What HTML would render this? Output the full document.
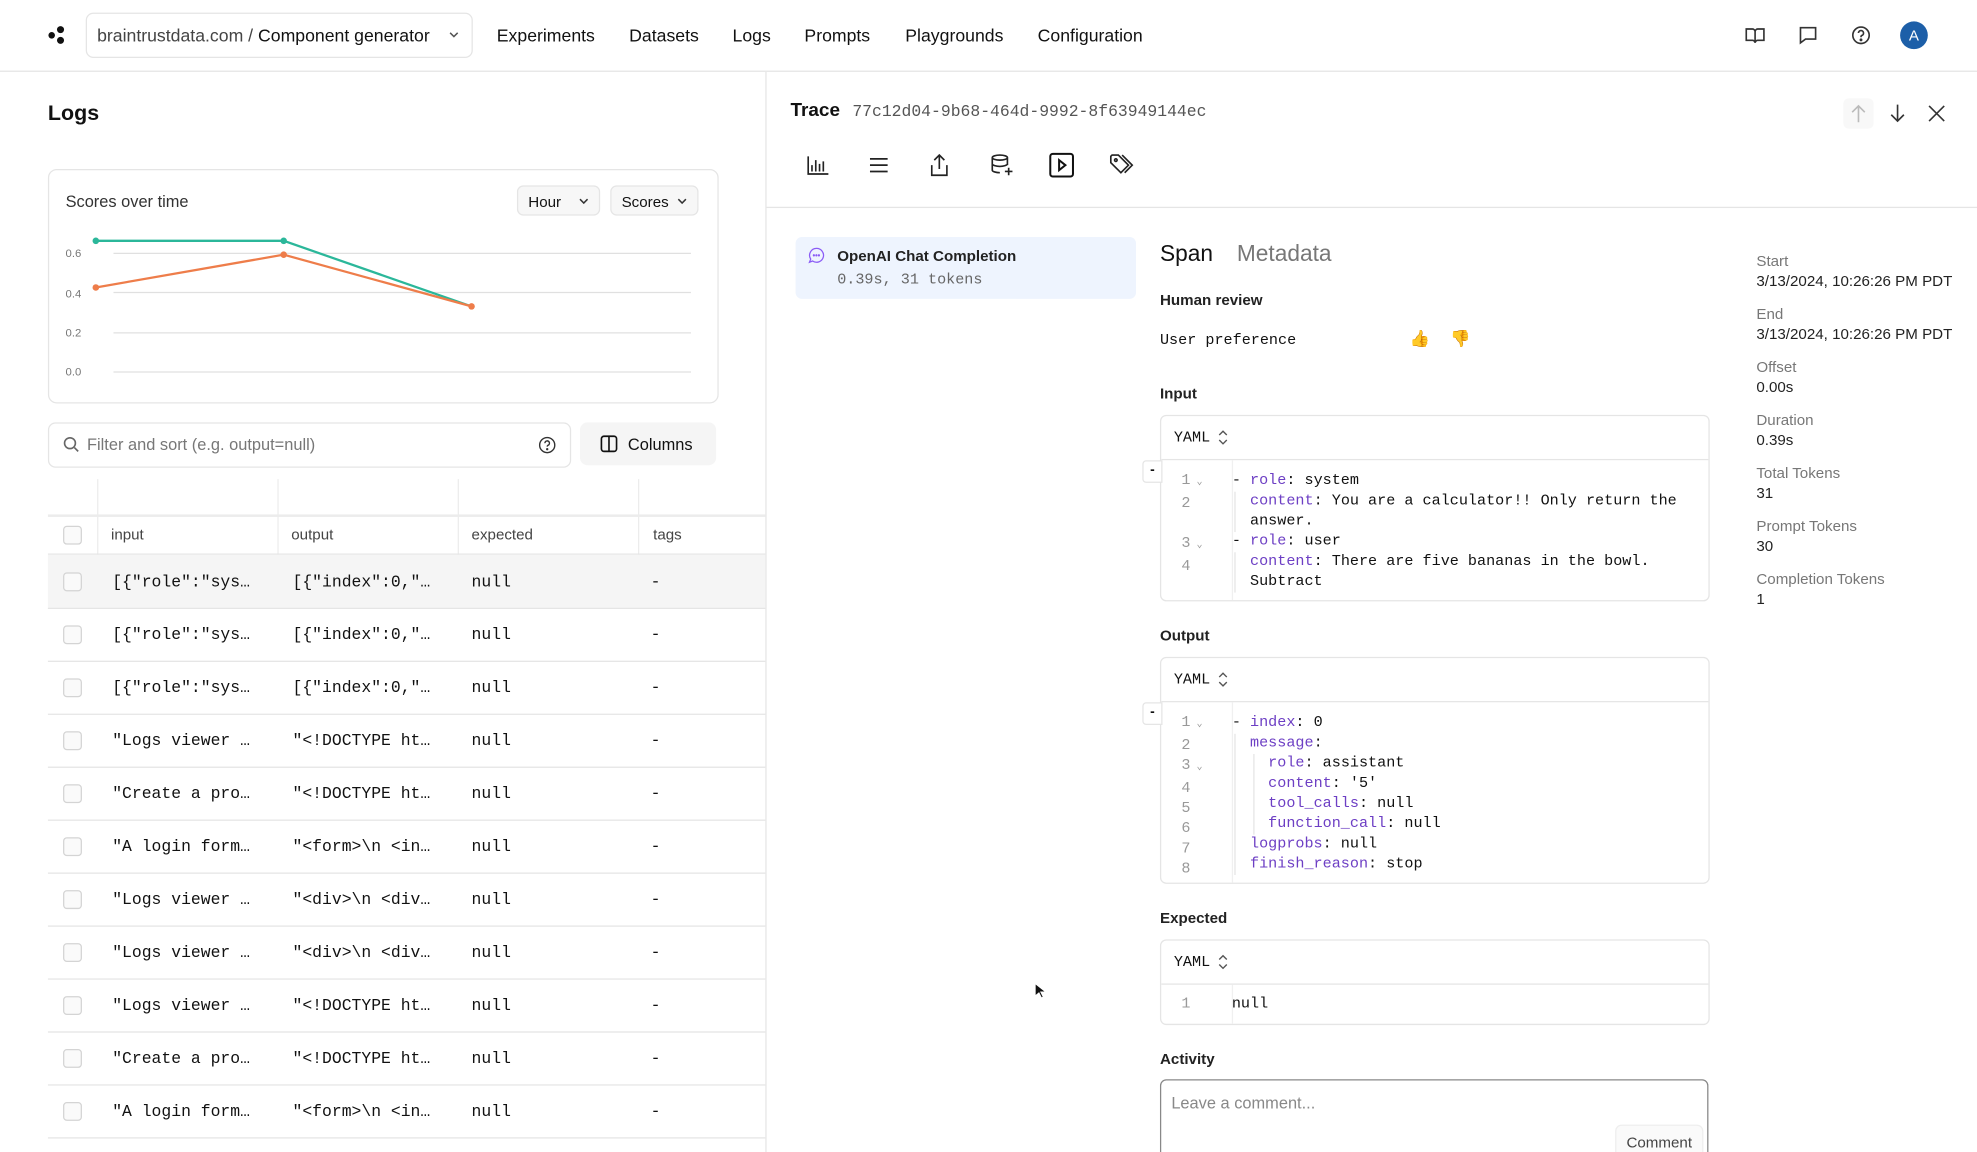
<!DOCTYPE html>
<html><head><meta charset="utf-8"><style>
html,body{margin:0;padding:0;background:#fff;overflow:hidden}
#w{position:relative;width:1568px;height:914px;transform:scale(1.26084);transform-origin:0 0;font-family:"Liberation Sans",sans-serif;color:#111;overflow:hidden}
.a{position:absolute;white-space:nowrap}
.m{font-family:"Liberation Mono",monospace}
.nav{font-size:14px;top:20px;color:#111}
.cb{position:absolute;width:13px;height:13px;border:1px solid #d4d4d4;border-radius:3px;background:#fafafa}
.row{position:absolute;left:38px;width:569px;height:42px;border-bottom:1px solid #e5e5e5}
.row span{position:absolute;top:14px;font-size:13px;font-family:"Liberation Mono",monospace}
.lbl{font-size:12px;color:#777}
.val{font-size:12px;color:#222}
.code{font-family:"Liberation Mono",monospace;font-size:12px;line-height:16px;white-space:pre;margin:0}
.k{color:#6d3fc4}
.ln{color:#999}
.box{position:absolute;left:920px;width:434px;border:1px solid #e5e5e5;border-radius:5px;overflow:hidden}
.bh{height:34px;border-bottom:1px solid #e5e5e5;font-family:"Liberation Mono",monospace;font-size:12px;line-height:34px;padding-left:10px;position:relative}
.sel{position:absolute;left:45px;top:11px}
.hl{font-size:12px;font-weight:bold;color:#222}
</style></head><body><div id="w">
<div class="a" style="left:0;top:56px;width:1568px;border-top:1px solid #e5e5e5"></div>
<svg class="a" style="left:38px;top:20px" width="18" height="16"><circle cx="3" cy="8" r="2.6" fill="#111"/><circle cx="10" cy="3.5" r="2.8" fill="#111"/><circle cx="10" cy="12" r="2.8" fill="#111"/></svg>
<div class="a" style="left:68px;top:10px;width:305px;height:34px;border:1px solid #e5e5e5;border-radius:6px"></div>
<div class="a" style="left:77px;top:20px;font-size:14px"><span style="color:#444">braintrustdata.com / </span>Component generator</div>
<svg class="a" style="left:355px;top:24px" width="10" height="8"><path d="M2 2l3 3 3-3" stroke="#555" fill="none" stroke-width="1.2"/></svg>
<div class="a nav" style="left:394px">Experiments</div>
<div class="a nav" style="left:499px">Datasets</div>
<div class="a nav" style="left:581px">Logs</div>
<div class="a nav" style="left:638px">Prompts</div>
<div class="a nav" style="left:718px">Playgrounds</div>
<div class="a nav" style="left:823px">Configuration</div>
<svg class="a" style="left:1384px;top:20px" width="16" height="16" fill="none" stroke="#333" stroke-width="1.3"><path d="M1 3h5c1 0 2 1 2 2v9c0-1-1-2-2-2H1zM15 3h-5c-1 0-2 1-2 2v9c0-1 1-2 2-2h5z"/></svg>
<svg class="a" style="left:1426px;top:20px" width="16" height="16" fill="none" stroke="#333" stroke-width="1.3"><path d="M2 2h12v9H6l-4 3z"/></svg>
<svg class="a" style="left:1468px;top:20px" width="16" height="16" fill="none" stroke="#333" stroke-width="1.3"><circle cx="8" cy="8" r="6.5"/><path d="M6 6.2a2 2 0 1 1 2.5 2c-.5.2-.5.6-.5 1.3"/><circle cx="8" cy="11.6" r=".5" fill="#333"/></svg>
<div class="a" style="left:1507px;top:17px;width:22px;height:22px;border-radius:50%;background:#1d5fa8;color:#fff;font-size:12px;text-align:center;line-height:22px">A</div>
<div class="a" style="left:607px;top:57px;height:857px;border-left:1px solid #e5e5e5"></div>
<div class="a" style="left:38px;top:80px;font-size:17px;font-weight:bold">Logs</div>
<div class="a" style="left:38px;top:134px;width:530px;height:184px;border:1px solid #e5e5e5;border-radius:7px"></div>
<div class="a" style="left:52px;top:152px;font-size:13px;color:#333">Scores over time</div>
<div class="a" style="left:410px;top:147px;width:66px;height:24px;border:1px solid #e5e5e5;border-radius:5px;background:#f7f7f7;font-size:12px;line-height:24px;padding-left:8px;box-sizing:border-box">Hour<svg style="position:absolute;left:48px;top:9px" width="8" height="6"><path d="M1 1l3 3 3-3" stroke="#333" fill="none" stroke-width="1.2"/></svg></div>
<div class="a" style="left:484px;top:147px;width:70px;height:24px;border:1px solid #e5e5e5;border-radius:5px;background:#f7f7f7;font-size:12px;line-height:24px;padding-left:8px;box-sizing:border-box">Scores<svg style="position:absolute;left:52px;top:9px" width="8" height="6"><path d="M1 1l3 3 3-3" stroke="#333" fill="none" stroke-width="1.2"/></svg></div>
<svg class="a" style="left:38px;top:134px" width="530" height="184">
<g stroke="#e0e0e0"><line x1="52" y1="67" x2="510" y2="67"/><line x1="52" y1="98" x2="510" y2="98"/><line x1="52" y1="130" x2="510" y2="130"/><line x1="52" y1="161" x2="510" y2="161"/></g>
<g font-size="9" fill="#777" font-family="Liberation Sans"><text x="14" y="70">0.6</text><text x="14" y="102">0.4</text><text x="14" y="133">0.2</text><text x="14" y="164">0.0</text></g>
<polyline points="38,57 187,57 336,109" stroke="#2bb79a" stroke-width="1.8" fill="none"/>
<polyline points="38,94 187,68 336,109" stroke="#ee7d4a" stroke-width="1.8" fill="none"/>
<g fill="#2bb79a"><circle cx="38" cy="57" r="2.6"/><circle cx="187" cy="57" r="2.6"/></g>
<g fill="#ee7d4a"><circle cx="38" cy="94" r="2.6"/><circle cx="187" cy="68" r="2.6"/><circle cx="336" cy="109" r="2.6"/></g>
</svg>
<div class="a" style="left:38px;top:335px;width:413px;height:34px;border:1px solid #e5e5e5;border-radius:6px"></div>
<svg class="a" style="left:50px;top:346px" width="13" height="13" fill="none" stroke="#666" stroke-width="1.3"><circle cx="5.5" cy="5.5" r="4.3"/><path d="M9 9l3 3"/></svg>
<div class="a" style="left:69px;top:345px;font-size:13px;color:#777">Filter and sort (e.g. output=null)</div>
<svg class="a" style="left:427px;top:346px" width="14" height="14" fill="none" stroke="#333" stroke-width="1.1"><circle cx="7" cy="7" r="6"/><path d="M5.2 5.5a1.8 1.8 0 1 1 2.3 1.7c-.4.2-.5.5-.5 1"/><circle cx="7" cy="10.3" r=".4" fill="#333"/></svg>
<div class="a" style="left:460px;top:335px;width:108px;height:34px;border-radius:6px;background:#f5f5f5"></div>
<svg class="a" style="left:476px;top:345px" width="14" height="14" fill="none" stroke="#111" stroke-width="1.3"><rect x="1" y="1" width="12" height="12" rx="2"/><path d="M7 1v12"/></svg>
<div class="a" style="left:498px;top:345px;font-size:13px">Columns</div>
<div class="a" style="left:38px;top:408px;width:569px;border-top:2px solid #ececec"></div>
<div class="a" style="left:77px;top:380px;height:60px;border-left:1px solid #ececec"></div>
<div class="a" style="left:220px;top:380px;height:60px;border-left:1px solid #ececec"></div>
<div class="a" style="left:363px;top:380px;height:60px;border-left:1px solid #ececec"></div>
<div class="a" style="left:506px;top:380px;height:60px;border-left:1px solid #ececec"></div>
<div class="cb" style="left:50px;top:417px"></div>
<div class="a" style="left:88px;top:417px;font-size:12px;color:#444">input</div>
<div class="a" style="left:231px;top:417px;font-size:12px;color:#444">output</div>
<div class="a" style="left:374px;top:417px;font-size:12px;color:#444">expected</div>
<div class="a" style="left:518px;top:417px;font-size:12px;color:#444">tags</div>
<div class="a" style="left:38px;top:439px;width:569px;border-top:1px solid #e5e5e5"></div>
<div class="row" style="top:440px;background:#f5f5f5"><div class="cb" style="left:12px;top:14px"></div><span style="left:51px">[{"role":"sys…</span><span style="left:194px">[{"index":0,"…</span><span style="left:336px">null</span><span style="left:478px">-</span></div>
<div class="row" style="top:482px"><div class="cb" style="left:12px;top:14px"></div><span style="left:51px">[{"role":"sys…</span><span style="left:194px">[{"index":0,"…</span><span style="left:336px">null</span><span style="left:478px">-</span></div>
<div class="row" style="top:524px"><div class="cb" style="left:12px;top:14px"></div><span style="left:51px">[{"role":"sys…</span><span style="left:194px">[{"index":0,"…</span><span style="left:336px">null</span><span style="left:478px">-</span></div>
<div class="row" style="top:566px"><div class="cb" style="left:12px;top:14px"></div><span style="left:51px">"Logs viewer …</span><span style="left:194px">"&lt;!DOCTYPE ht…</span><span style="left:336px">null</span><span style="left:478px">-</span></div>
<div class="row" style="top:608px"><div class="cb" style="left:12px;top:14px"></div><span style="left:51px">"Create a pro…</span><span style="left:194px">"&lt;!DOCTYPE ht…</span><span style="left:336px">null</span><span style="left:478px">-</span></div>
<div class="row" style="top:650px"><div class="cb" style="left:12px;top:14px"></div><span style="left:51px">"A login form…</span><span style="left:194px">"&lt;form&gt;\n &lt;in…</span><span style="left:336px">null</span><span style="left:478px">-</span></div>
<div class="row" style="top:692px"><div class="cb" style="left:12px;top:14px"></div><span style="left:51px">"Logs viewer …</span><span style="left:194px">"&lt;div&gt;\n &lt;div…</span><span style="left:336px">null</span><span style="left:478px">-</span></div>
<div class="row" style="top:734px"><div class="cb" style="left:12px;top:14px"></div><span style="left:51px">"Logs viewer …</span><span style="left:194px">"&lt;div&gt;\n &lt;div…</span><span style="left:336px">null</span><span style="left:478px">-</span></div>
<div class="row" style="top:776px"><div class="cb" style="left:12px;top:14px"></div><span style="left:51px">"Logs viewer …</span><span style="left:194px">"&lt;!DOCTYPE ht…</span><span style="left:336px">null</span><span style="left:478px">-</span></div>
<div class="row" style="top:818px"><div class="cb" style="left:12px;top:14px"></div><span style="left:51px">"Create a pro…</span><span style="left:194px">"&lt;!DOCTYPE ht…</span><span style="left:336px">null</span><span style="left:478px">-</span></div>
<div class="row" style="top:860px"><div class="cb" style="left:12px;top:14px"></div><span style="left:51px">"A login form…</span><span style="left:194px">"&lt;form&gt;\n &lt;in…</span><span style="left:336px">null</span><span style="left:478px">-</span></div>
<div class="a" style="left:627px;top:79px;font-size:15px;font-weight:bold">Trace</div>
<div class="a m" style="left:676px;top:81px;font-size:13px;color:#555">77c12d04-9b68-464d-9992-8f63949144ec</div>
<div class="a" style="left:1462px;top:78px;width:24px;height:24px;border-radius:4px;background:#f8f8f8"></div>
<svg class="a" style="left:1467px;top:82px" width="14" height="16" fill="none" stroke="#bbb" stroke-width="1.3"><path d="M7 15V2M2 7l5-5 5 5"/></svg>
<svg class="a" style="left:1498px;top:82px" width="14" height="16" fill="none" stroke="#333" stroke-width="1.3"><path d="M7 1v13M2 9l5 5 5-5"/></svg>
<svg class="a" style="left:1529px;top:83px" width="14" height="14" fill="none" stroke="#333" stroke-width="1.3"><path d="M1 1l12 12M13 1L1 13"/></svg>
<svg class="a" style="left:640px;top:123px" width="18" height="16" fill="none" stroke="#222" stroke-width="1.3"><path d="M1 1v14h16M4 13V8M7 13V4M10 13V7M13 13V5"/></svg>
<svg class="a" style="left:689px;top:124px" width="16" height="14" fill="none" stroke="#222" stroke-width="1.4"><path d="M1 2h14M1 7h14M1 12h14"/></svg>
<svg class="a" style="left:737px;top:122px" width="16" height="18" fill="none" stroke="#222" stroke-width="1.3"><path d="M8 12V1M4 5l4-4 4 4M2 9v8h12V9"/></svg>
<svg class="a" style="left:786px;top:122px" width="18" height="18" fill="none" stroke="#222" stroke-width="1.3"><ellipse cx="7" cy="3" rx="6" ry="2"/><path d="M1 3v10c0 1 3 2 6 2M13 3v6M1 8c0 1 3 2 6 2s6-1 6-2M14 11v6M11 14h6"/></svg>
<svg class="a" style="left:832px;top:121px" width="20" height="20" fill="none" stroke="#111" stroke-width="1.6"><rect x="1" y="1" width="18" height="18" rx="2"/><path d="M8 6l5 4-5 4z"/></svg>
<svg class="a" style="left:880px;top:122px" width="20" height="18" fill="none" stroke="#222" stroke-width="1.3"><path d="M1 2v5l8 8 6-6-8-8H2zM10 1l8 8-6 6"/><circle cx="5" cy="5" r="1"/></svg>
<div class="a" style="left:608px;top:164px;width:960px;border-top:1px solid #e5e5e5"></div>
<div class="a" style="left:631px;top:188px;width:270px;height:49px;border-radius:5px;background:#eef4fe"></div>
<svg class="a" style="left:641px;top:196px" width="13" height="13" fill="none" stroke="#8b5cf6" stroke-width="1"><path d="M6.5 1a5.5 5.5 0 1 1-3 10L1 12l1-2.5A5.5 5.5 0 0 1 6.5 1z"/><circle cx="4.5" cy="6.5" r=".4" fill="#8b5cf6"/><circle cx="6.5" cy="6.5" r=".4" fill="#8b5cf6"/><circle cx="8.5" cy="6.5" r=".4" fill="#8b5cf6"/></svg>
<div class="a" style="left:664px;top:196px;font-size:12px;font-weight:bold;color:#222">OpenAI Chat Completion</div>
<div class="a m" style="left:664px;top:215px;font-size:12px;color:#666">0.39s, 31 tokens</div>
<div class="a" style="left:920px;top:191px;font-size:18px">Span</div>
<div class="a" style="left:981px;top:191px;font-size:18px;color:#777">Metadata</div>
<div class="a hl" style="left:920px;top:231px">Human review</div>
<div class="a m" style="left:920px;top:263px;font-size:12px">User preference</div>
<div class="a" style="left:1118px;top:261px;font-size:13px">👍</div>
<div class="a" style="left:1150px;top:261px;font-size:13px">👎</div>
<div class="a hl" style="left:920px;top:305px">Input</div>
<div class="box" style="top:329px;height:146px"><div class="bh">YAML<svg class="sel" width="8" height="12" fill="none" stroke="#555" stroke-width="1.1"><path d="M1 4l3-3 3 3M1 8l3 3 3-3"/></svg></div>
<div class="a" style="left:56px;top:35px;height:111px;border-left:1px solid #f0f0f0"></div>
<div class="a" style="left:58px;top:60px;height:32px;border-left:1px solid #e5e5e5"></div>
<div class="a" style="left:58px;top:108px;height:32px;border-left:1px solid #e5e5e5"></div>
<div class="a code ln" style="left:16px;top:43px">1<span style="font-size:8px"> ⌄</span><br>2<br><br>3<span style="font-size:8px"> ⌄</span><br>4</div>
<pre class="a code" style="left:56px;top:43px">- <span class="k">role</span>: system
  <span class="k">content</span>: You are a calculator!! Only return the
  answer.
- <span class="k">role</span>: user
  <span class="k">content</span>: There are five bananas in the bowl.
  Subtract</pre></div>
<div class="a" style="left:906px;top:365px;width:14px;height:16px;border:1px solid #e5e5e5;border-radius:3px 0 0 3px;background:#fff;font-size:11px;font-weight:bold;text-align:center;line-height:14px">-</div>
<div class="a hl" style="left:920px;top:497px">Output</div>
<div class="box" style="top:521px;height:178px"><div class="bh">YAML<svg class="sel" width="8" height="12" fill="none" stroke="#555" stroke-width="1.1"><path d="M1 4l3-3 3 3M1 8l3 3 3-3"/></svg></div>
<div class="a" style="left:56px;top:35px;height:143px;border-left:1px solid #f0f0f0"></div>
<div class="a" style="left:58px;top:60px;height:112px;border-left:1px solid #e5e5e5"></div>
<div class="a" style="left:73px;top:76px;height:64px;border-left:1px solid #e5e5e5"></div>
<div class="a code ln" style="left:16px;top:43px">1<span style="font-size:8px"> ⌄</span><br>2<br>3<span style="font-size:8px"> ⌄</span><br>4<br>5<br>6<br>7<br>8</div>
<pre class="a code" style="left:56px;top:43px">- <span class="k">index</span>: 0
  <span class="k">message</span>:
    <span class="k">role</span>: assistant
    <span class="k">content</span>: '5'
    <span class="k">tool_calls</span>: null
    <span class="k">function_call</span>: null
  <span class="k">logprobs</span>: null
  <span class="k">finish_reason</span>: stop</pre></div>
<div class="a" style="left:906px;top:557px;width:14px;height:16px;border:1px solid #e5e5e5;border-radius:3px 0 0 3px;background:#fff;font-size:11px;font-weight:bold;text-align:center;line-height:14px">-</div>
<div class="a hl" style="left:920px;top:721px">Expected</div>
<div class="box" style="top:745px;height:66px"><div class="bh">YAML<svg class="sel" width="8" height="12" fill="none" stroke="#555" stroke-width="1.1"><path d="M1 4l3-3 3 3M1 8l3 3 3-3"/></svg></div>
<div class="a" style="left:56px;top:35px;height:31px;border-left:1px solid #f0f0f0"></div>
<div class="a code ln" style="left:16px;top:42px">1</div><div class="a code" style="left:56px;top:42px">null</div></div>
<div class="a hl" style="left:920px;top:833px">Activity</div>
<div class="a" style="left:920px;top:856px;width:433px;height:70px;border:1px solid #888;border-radius:5px"></div>
<div class="a" style="left:929px;top:867px;font-size:13px;color:#888">Leave a comment...</div>
<div class="a" style="left:1281px;top:892px;width:68px;height:30px;border:1px solid #eee;border-radius:5px;background:#fafafa;font-size:12px;color:#444;text-align:center;line-height:26px">Comment</div>
<div class="a lbl" style="left:1393px;top:200px">Start</div><div class="a val" style="left:1393px;top:216px">3/13/2024, 10:26:26 PM PDT</div>
<div class="a lbl" style="left:1393px;top:242px">End</div><div class="a val" style="left:1393px;top:258px">3/13/2024, 10:26:26 PM PDT</div>
<div class="a lbl" style="left:1393px;top:284px">Offset</div><div class="a val" style="left:1393px;top:300px">0.00s</div>
<div class="a lbl" style="left:1393px;top:326px">Duration</div><div class="a val" style="left:1393px;top:342px">0.39s</div>
<div class="a lbl" style="left:1393px;top:368px">Total Tokens</div><div class="a val" style="left:1393px;top:384px">31</div>
<div class="a lbl" style="left:1393px;top:410px">Prompt Tokens</div><div class="a val" style="left:1393px;top:426px">30</div>
<div class="a lbl" style="left:1393px;top:452px">Completion Tokens</div><div class="a val" style="left:1393px;top:468px">1</div>
<svg class="a" style="left:820px;top:779px" width="10" height="14"><path d="M1 1v10l3-2.5 2 4 1.5-.7-2-4h4z" fill="#111" stroke="#fff" stroke-width=".8"/></svg>
</div></body></html>
